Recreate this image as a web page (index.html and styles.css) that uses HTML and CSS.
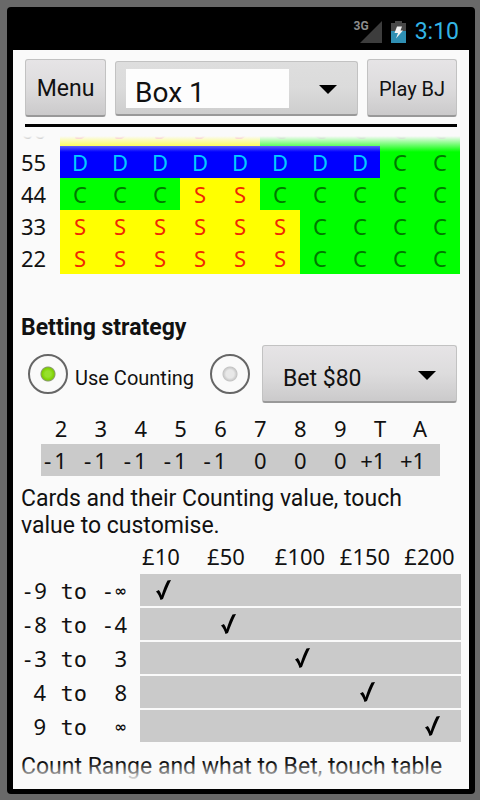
FILE: index.html
```html
<!DOCTYPE html>
<html lang="en">
<head>
<meta charset="utf-8">
<meta name="viewport" content="width=device-width, initial-scale=1">
<title>Blackjack strategy</title>
<link rel="stylesheet" href="styles.css">
</head>
<body>
<div class="device">
  <header class="status">
    <div class="signal">
      <span class="network">3G</span>
      <svg width="22" height="22" viewBox="0 0 22 22" aria-hidden="true"><path d="M22 0V22H0Z" fill="#3d3d3d"/></svg>
    </div>
    <svg class="battery" width="15" height="22" viewBox="0 0 15 22" aria-hidden="true">
      <path d="M0 2H4V0H11V2H15V11H0Z" fill="#484848"/>
      <path d="M0 10H15V22H0Z" fill="#2f8fb3"/>
      <path d="M6 5.500H11L9.500 9.500H12L5 17.500L7 12H3.500Z" fill="#f4f4f4"/>
    </svg>
    <time class="clock">3:10</time>
  </header>
  <main class="screen">
    <div class="toolbar">
      <button type="button" class="key menu">Menu</button>
      <div class="picker box-picker">
        <select class="key" aria-label="Box"><option>Box 1</option></select>
        <svg class="caret" width="18" height="9" viewBox="0 0 18 9" aria-hidden="true"><path d="M0 0H18L9 9Z"/></svg>
      </div>
      <button type="button" class="key play">Play BJ</button>
    </div>
    <div class="content">
      <table class="strategy">
        <tbody>
          <tr><th scope="row">66</th><td class="s">S</td><td class="s">S</td><td class="s">S</td><td class="s">S</td><td class="s">S</td><td class="c">C</td><td class="c">C</td><td class="c">C</td><td class="c">C</td><td class="c">C</td></tr>
          <tr><th scope="row">55</th><td class="d">D</td><td class="d">D</td><td class="d">D</td><td class="d">D</td><td class="d">D</td><td class="d">D</td><td class="d">D</td><td class="d">D</td><td class="c">C</td><td class="c">C</td></tr>
          <tr><th scope="row">44</th><td class="c">C</td><td class="c">C</td><td class="c">C</td><td class="s">S</td><td class="s">S</td><td class="c">C</td><td class="c">C</td><td class="c">C</td><td class="c">C</td><td class="c">C</td></tr>
          <tr><th scope="row">33</th><td class="s">S</td><td class="s">S</td><td class="s">S</td><td class="s">S</td><td class="s">S</td><td class="s">S</td><td class="c">C</td><td class="c">C</td><td class="c">C</td><td class="c">C</td></tr>
          <tr><th scope="row">22</th><td class="s">S</td><td class="s">S</td><td class="s">S</td><td class="s">S</td><td class="s">S</td><td class="s">S</td><td class="c">C</td><td class="c">C</td><td class="c">C</td><td class="c">C</td></tr>
        </tbody>
      </table>
      <h2>Betting strategy</h2>
      <div class="betting">
        <input type="radio" name="betting" id="counting" checked>
        <label for="counting">Use Counting</label>
        <input type="radio" name="betting" id="fixed" aria-label="Fixed bet">
        <div class="picker bet-picker">
          <select class="key" aria-label="Bet"><option>Bet $80</option></select>
          <svg class="caret" width="18" height="9" viewBox="0 0 18 9" aria-hidden="true"><path d="M0 0H18L9 9Z"/></svg>
        </div>
      </div>
      <table class="counts">
        <thead>
          <tr><th scope="col">2</th><th scope="col">3</th><th scope="col">4</th><th scope="col">5</th><th scope="col">6</th><th scope="col">7</th><th scope="col">8</th><th scope="col">9</th><th scope="col">T</th><th scope="col">A</th></tr>
        </thead>
        <tbody>
          <tr><td class="signed"><span class="mono">-</span>1</td><td class="signed"><span class="mono">-</span>1</td><td class="signed"><span class="mono">-</span>1</td><td class="signed"><span class="mono">-</span>1</td><td class="signed"><span class="mono">-</span>1</td><td>0</td><td>0</td><td>0</td><td class="signed">+1</td><td class="signed">+1</td></tr>
        </tbody>
      </table>
      <p>Cards and their Counting value, touch value to customise.</p>
      <svg class="defs" width="0" height="0" aria-hidden="true">
        <symbol id="tick" viewBox="0 0 17 20"><path d="M1 11.500L3.800 10C5.200 11.500 5.900 13 6.500 15.500C8.300 9.500 10.300 4.500 12.500 0.500L16 0C13 6 10.500 12 8 19L5.500 20C4.500 16.500 3 13.500 1 11.500Z"/></symbol>
      </svg>
      <table class="ranges">
        <colgroup>
          <col class="from"><col class="to"><col class="until"><col class="gutter">
          <col class="b10"><col class="b50"><col class="b100"><col class="b150"><col>
        </colgroup>
        <thead>
          <tr><td colspan="4"></td><th scope="col">£10</th><th scope="col">£50</th><th scope="col">£100</th><th scope="col">£150</th><th scope="col">£200</th></tr>
        </thead>
        <tbody>
          <tr><th><span class="mono">-</span>9</th><th><span class="mono">to</span></th><th><span class="mono">-</span><span class="inf">∞</span></th><th></th><td><svg class="tick"><use href="#tick"/></svg></td><td></td><td></td><td></td><td></td></tr>
          <tr><th><span class="mono">-</span>8</th><th><span class="mono">to</span></th><th><span class="mono">-</span>4</th><th></th><td></td><td><svg class="tick"><use href="#tick"/></svg></td><td></td><td></td><td></td></tr>
          <tr><th><span class="mono">-</span>3</th><th><span class="mono">to</span></th><th>3</th><th></th><td></td><td></td><td><svg class="tick"><use href="#tick"/></svg></td><td></td><td></td></tr>
          <tr><th>4</th><th><span class="mono">to</span></th><th>8</th><th></th><td></td><td></td><td></td><td><svg class="tick"><use href="#tick"/></svg></td><td></td></tr>
          <tr><th>9</th><th><span class="mono">to</span></th><th><span class="inf">∞</span></th><th></th><td></td><td></td><td></td><td></td><td><svg class="tick"><use href="#tick"/></svg></td></tr>
        </tbody>
      </table>
      <p>Count Range and what to Bet, touch table</p>
    </div>
  </main>
</div>
</body>
</html>
```

FILE: styles.css
```css
* { box-sizing: border-box; }

body {
  margin: 0;
  height: 100vh;
  padding: 7px 5px 6px 7px;
  background: #696969;
  color: #111;
  font-family: Roboto, "Liberation Sans", sans-serif;
  font-size: 23px;
}

.device {
  display: flex;
  flex-direction: column;
  height: 100%;
  padding: 0 6px 5px;
  background: #000;
  border-radius: 4px;
}

.status {
  display: flex;
  align-items: center;
  justify-content: flex-end;
  gap: 9px;
  flex: none;
  height: 43px;
  padding: 6px 10px 0 0;
}

.signal { display: flex; position: relative; }

.network {
  position: absolute;
  right: 13px;
  top: -2px;
  color: #8c8c8c;
  font-size: 12px;
  font-weight: 700;
  line-height: 14px;
}

.clock {
  color: #33b5e5;
  font-size: 23px;
  line-height: 28px;
}

.screen {
  display: flex;
  flex-direction: column;
  flex: 1;
  min-height: 0;
  padding-bottom: 10px;
  background: #fafafa;
}

.toolbar {
  display: flex;
  align-items: center;
  gap: 9px;
  flex: none;
  margin: 0 12px 9px;
  padding: 9px 0 7px;
  border-bottom: 3px solid #000;
}

.key {
  height: 58px;
  padding: 2px 0 0;
  border: 1px solid #c2c2c2;
  border-bottom: 2px solid #999;
  border-radius: 3px;
  background: linear-gradient(#e6e4e6, #dddcdd 50%, #cbcacb);
  color: #111;
  font-family: inherit;
}

.menu { width: 81px; font-size: 23px; }
.play { width: 90px; font-size: 20px; }

.picker { position: relative; }
.picker .key { display: block; width: 100%; appearance: none; }
.caret { position: absolute; right: 21px; top: 24px; pointer-events: none; }

.box-picker { flex: 1; }
.box-picker .key {
  height: 55px;
  padding: 10px 0 0 19px;
  background:
    linear-gradient(#fdfdfd, #fdfdfd) 10px 7px / calc(100% - 78px) 39px no-repeat,
    linear-gradient(#dedede, #dbdbdb 50%, #cecece);
  font-size: 28px;
}

.content {
  position: relative;
  flex: 1;
  min-height: 0;
  overflow: hidden;
  padding: 0 8px;
}

/* edges of the scrolling area fade out */
.content::before,
.content::after {
  content: "";
  position: absolute;
  left: 0;
  right: 0;
  pointer-events: none;
}
.content::before {
  top: 0;
  height: 16px;
  background: linear-gradient(#fafafa, #fafafa00);
}
.content::after {
  bottom: 0;
  height: 16px;
  background: linear-gradient(#fafafa00, #fafafae0);
}

table {
  border-collapse: collapse;
  table-layout: fixed;
  font-family: "Noto Sans", "Open Sans", sans-serif;
  font-size: 22px;
  line-height: 32px;
}
th, td { padding: 0; font-weight: 400; text-align: center; }

.strategy { width: calc(100% - 1px); margin-top: -22px; }
.strategy tr, .counts tr { height: 32px; }
.strategy th { width: 39px; text-align: left; }
.d { background: #00f; color: #0cf; }
.c { background: #0f0; color: #007800; }
.s { background: #ff0; color: #f02800; }

h2 {
  margin: 40px 0 3px;
  font-size: 23px;
  line-height: 28px;
}

.betting { display: flex; align-items: center; padding: 0 4px 0 7px; }
.betting label { flex: 1; margin: 8px 0 0 7px; font-size: 20px; }
.bet-picker { width: 195px; margin-left: 12px; }
.bet-picker .key { padding: 10px 0 0 20px; font-size: 23px; }
.bet-picker .caret { top: 26px; }

input[type="radio"] {
  flex: none;
  width: 40px;
  height: 40px;
  margin: 0;
  appearance: none;
  border: 2px solid #666;
  border-radius: 50%;
  background: radial-gradient(circle, #e8e8e8 0 4px, #c4c4c4 7px, transparent 8px);
}
input[type="radio"]:checked {
  background: radial-gradient(circle, #96e02c 0 3px, #7ed000 6px, #8a9a70 7px, transparent 8px);
}

.counts { width: calc(100% - 41px); margin: 9px 0 0 20px; }
.counts tbody { background: #cacaca; }
.counts .signed { text-align: left; }

p { margin: 9px 0 0; padding-right: 10px; line-height: 27px; }

.defs { display: block; }

.ranges {
  width: 100%;
  border-collapse: separate;
  border-spacing: 0 2px;
}
.ranges tr { height: 32px; }
.ranges thead tr { height: 31px; }
.ranges thead th { padding-right: 2px; line-height: 31px; }
.ranges tbody th { text-align: right; }
.ranges tbody td { padding-left: 3px; background: #cacaca; }
.from { width: 25px; }
.to { width: 41px; }
.until { width: 40px; }
.gutter { width: 13px; }
.b10 { width: 44px; }
.b50 { width: 86px; }
.b100 { width: 62px; }
.b150 { width: 68px; }
.mono { font-family: "DejaVu Sans Mono", monospace; line-height: 1; }
.inf {
  font-family: "DejaVu Sans", sans-serif;
  font-size: 15px;
  font-weight: 700;
  line-height: 1;
  vertical-align: 3px;
}
.tick { display: block; width: 17px; height: 20px; margin: 0 auto; }
```
